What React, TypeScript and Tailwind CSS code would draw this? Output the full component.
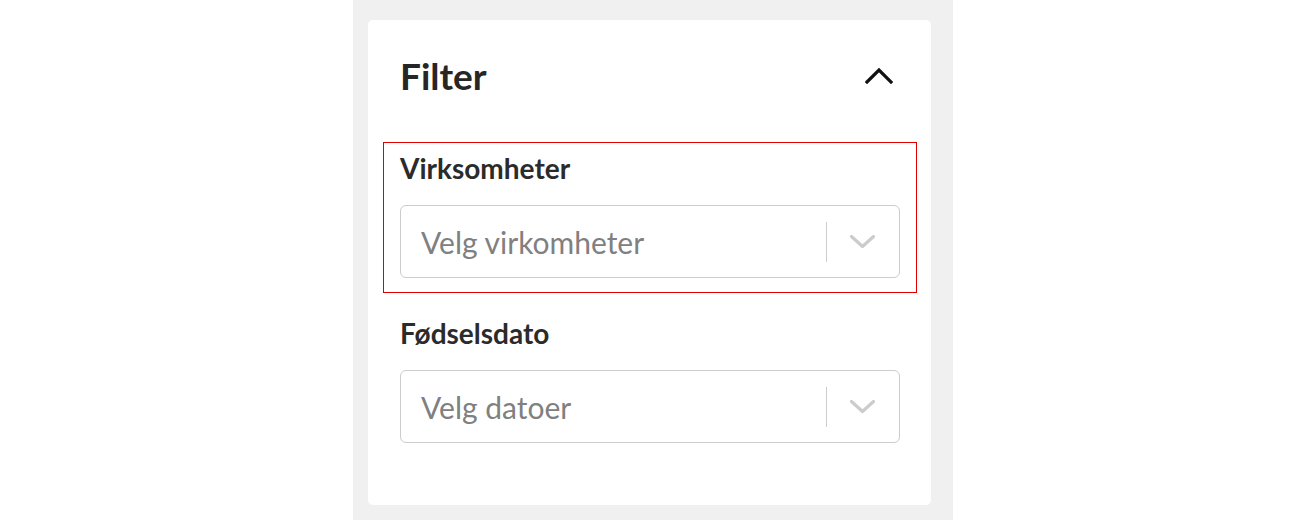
import React from 'react';

function ChevronDown() {
  return (
    <svg width="25" height="14" viewBox="0 0 25 14" fill="none" className="block">
      <polyline points="1.5,1.5 12.5,11.5 23.5,1.5" stroke="#cccccc" strokeWidth="3.2" strokeLinecap="round" strokeLinejoin="round" />
    </svg>
  );
}

function SelectField({ label, placeholder, highlighted }: { label: string; placeholder: string; highlighted?: boolean }) {
  return (
    <div
      className={`-mx-[17px] border px-4 pt-[10px] pb-[14px] ${highlighted ? 'border-[#e00000]' : 'border-transparent'}`}
    >
      <label className="block text-[28px] leading-[30px] font-bold text-[#2b2b2b]">{label}</label>
      <div className="mt-[22px] flex h-[73px] items-center rounded-[6px] border border-[#cccccc] bg-white">
        <div className="flex-1 pl-[20px] text-[30px] leading-[36px] text-[#808080]">{placeholder}</div>
        <div className="flex h-full items-center">
          <span className="h-[40px] w-px bg-[#cccccc]" />
          <span className="pl-[23px] pr-[24px]">
            <ChevronDown />
          </span>
        </div>
      </div>
    </div>
  );
}

export default function App() {
  return (
    <div className="min-h-[522px] bg-white" style={{ fontFamily: 'Lato, "Liberation Sans", sans-serif' }}>
      <div className="mx-auto w-[600px] bg-[#f0f0f0] pt-[20px] pr-[22px] pb-[15px] pl-[15px]">
        <div className="h-[485px] rounded-[5px] bg-white pt-[35px] pr-[31px] pl-[32px]">
          <div className="mb-[45px] flex h-[42px] items-center justify-between">
            <h2 className="text-[37px] leading-[42px] font-bold text-[#262626]">Filter</h2>
            <svg width="28" height="17" viewBox="0 0 28 17" fill="none" className="mr-[7px] -mt-[2px] block">
              <polyline points="2,15 14,3 26,15" stroke="#111111" strokeWidth="3.2" strokeLinecap="square" />
            </svg>
          </div>
          <div className="flex flex-col gap-[14px]">
            <SelectField label="Virksomheter" placeholder="Velg virkomheter" highlighted />
            <SelectField label="Fødselsdato" placeholder="Velg datoer" />
          </div>
        </div>
      </div>
    </div>
  );
}
